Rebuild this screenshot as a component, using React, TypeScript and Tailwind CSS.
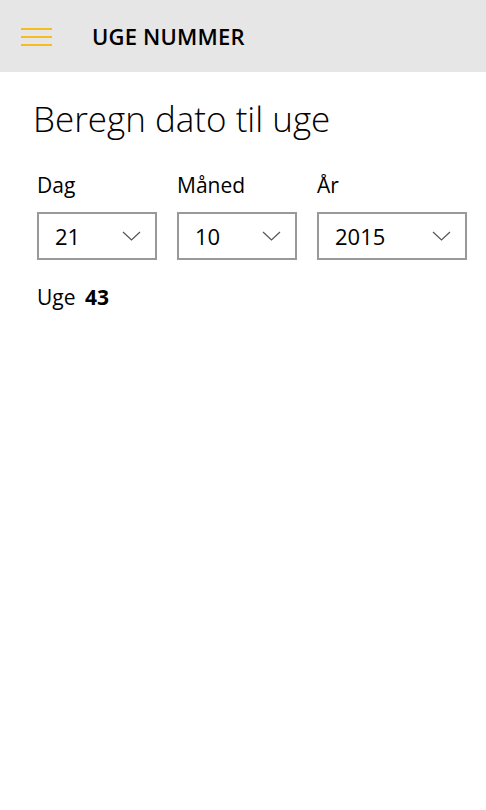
import { useState } from "react";

const font = { fontFamily: '"Open Sans", "Noto Sans", sans-serif' };

function Chevron() {
  return (
    <svg width="19" height="10" viewBox="0 0 19 10" fill="none" className="shrink-0">
      <path d="M1 1 L9.5 9 L18 1" stroke="#555" strokeWidth="1.2" />
    </svg>
  );
}

function Picker({ label, value, width }: { label: string; value: string; width: string }) {
  return (
    <div className="flex flex-col">
      <span className="text-[21px] leading-[30px] text-black mb-[12px]">{label}</span>
      <div className={`${width} h-[48px] border-2 border-[#999999] flex items-center justify-between pl-[16px] pr-[14px]`}>
        <span className="text-[22px] text-black">{value}</span>
        <Chevron />
      </div>
    </div>
  );
}

export default function App() {
  const [week] = useState(43);
  return (
    <div className="min-h-screen w-[486px] bg-white" style={font}>
      <header className="h-[72px] bg-[#e6e6e6] flex items-center">
        <div className="w-[31px] ml-[21px] flex flex-col gap-[6px] mt-[2px]">
          <span className="h-[2px] bg-[#f7bd20]" />
          <span className="h-[2px] bg-[#f7bd20]" />
          <span className="h-[2px] bg-[#f7bd20]" />
        </div>
        <h1 className="ml-[40px] text-[22px] font-semibold text-black tracking-[0.2px]">UGE NUMMER</h1>
      </header>
      <main className="px-[35px] pt-[24px]">
        <h2 className="text-[35px] font-light text-black leading-[46px] -ml-[2px]">Beregn dato til uge</h2>
        <div className="flex gap-[20px] mt-[28px] pl-[2px]">
          <Picker label="Dag" value="21" width="w-[120px]" />
          <Picker label="Måned" value="10" width="w-[120px]" />
          <Picker label="År" value="2015" width="w-[150px]" />
        </div>
        <p className="mt-[22px] pl-[2px] text-[21px] text-black">
          Uge <span className="font-bold ml-[4px]">{week}</span>
        </p>
      </main>
    </div>
  );
}
